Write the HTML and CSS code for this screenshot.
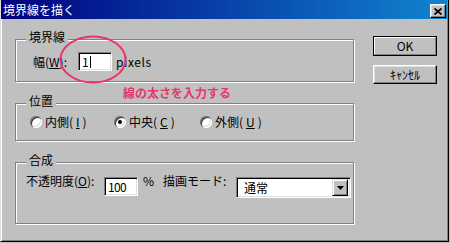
FILE: index.html
```html
<!DOCTYPE html>
<html lang="ja">
<head>
<meta charset="utf-8">
<title>境界線を描く</title>
<link rel="stylesheet" href="styles.css">
</head>
<body>
<div class="window">
  <div class="titlebar">
    <span class="title">境界線を描く</span>
    <span class="close"><svg width="8" height="7" viewBox="0 0 8 7"><path d="M0.5 0.5 L7.5 6.5 M7.5 0.5 L0.5 6.5" stroke="#000" stroke-width="1.7" fill="none"/></svg></span>
  </div>
  <div class="content">
    <div class="left">
      <div class="group g1">
        <span class="legend">境界線</span>
        <div class="row row1">
          <span class="lbl lbl-width">幅(<u>W</u>):</span>
          <span class="textbox tb-width"><span class="val">1</span><span class="caret"></span></span>
          <span class="unit">pixels</span>
        </div>
      </div>
      <div class="group g2">
        <span class="legend">位置</span>
        <div class="radios">
          <span class="radio"><span class="rb"></span>内側(<u>I</u>)</span>
          <span class="radio"><span class="rb checked"></span>中央(<u>C</u>)</span>
          <span class="radio"><span class="rb"></span>外側(<u>U</u>)</span>
        </div>
      </div>
      <div class="group g3">
        <span class="legend">合成</span>
        <div class="row row3">
          <span class="lbl lbl-opacity">不透明度(<u>O</u>):</span>
          <span class="textbox tb-opacity"><span class="val num">100</span></span>
          <span class="lbl pct">%</span>
          <span class="lbl lbl-mode">描画モード:</span>
          <span class="select"><span class="sel-text">通常</span><span class="arrow"><svg width="7" height="4" viewBox="0 0 7 4"><path d="M0 0H7L3.5 4Z" fill="#000"/></svg></span></span>
        </div>
      </div>
    </div>
    <div class="buttons">
      <div class="btn default"><span class="btn-in">OK</span></div>
      <div class="btn"><span class="btn-in">ｷｬﾝｾﾙ</span></div>
    </div>
  </div>
  <svg class="annot-ellipse" width="68" height="50" viewBox="0 0 68 50"><ellipse cx="34" cy="24.5" rx="32.5" ry="23" fill="none" stroke="#e8356c" stroke-width="2"/></svg>
  <div class="annot-text">線の太さを入力する</div>
</div>
</body>
</html>
```

FILE: styles.css
```css
html, body {
  margin: 0;
  padding: 0;
  background: #c0c0c0;
}
body {
  font-family: "Noto Sans CJK JP", "Noto Sans", sans-serif;
  font-size: 12px;
  line-height: 14px;
  color: #000;
}
.window {
  position: relative;
  width: 449px;
  height: 242px;
  box-sizing: border-box;
  border-left: 1px solid #dfdfdf;
  border-right: 1px solid #000;
  border-bottom: 1px solid #000;
  box-shadow: inset 1px 0 #fff, inset -1px -1px #808080;
  background: #c0c0c0;
  display: flex;
  flex-direction: column;
}
.titlebar {
  height: 19px;
  margin-right: 1px;
  display: flex;
  align-items: flex-start;
  justify-content: space-between;
  background: linear-gradient(to right, #000080, #1084d0);
}
.title {
  color: #fff;
  line-height: 19px;
  padding-left: 2px;
}
.close {
  margin-top: 4px;
  margin-right: 1px;
  width: 16px;
  height: 14px;
  box-sizing: border-box;
  background: #c0c0c0;
  border: 1px solid;
  border-color: #fff #000 #000 #fff;
  box-shadow: inset -1px -1px #808080, inset 1px 1px #dfdfdf;
  display: flex;
  align-items: center;
  justify-content: center;
}
.close svg { display: block; }
.content {
  display: flex;
  gap: 19px;
  padding: 17px 0 0 14px;
}
.left {
  width: 339px;
  padding-top: 3px;
  display: flex;
  flex-direction: column;
  gap: 21px;
}
.group {
  position: relative;
  box-sizing: border-box;
  border: 1px solid #808080;
  box-shadow: inset 1px 1px #fff, 1px 1px #fff;
}
.legend {
  position: absolute;
  top: -10px;
  left: 10px;
  padding: 0 3px;
  background: #c0c0c0;
}
.g1 { height: 43px; padding: 12px 0 0 17px; }
.g2 { height: 38px; padding-left: 14px; display: flex; align-items: center; }
.g3 { height: 62px; padding: 14px 0 0 10px; }
.row {
  display: flex;
}
.row1 { align-items: center; }
.row3 { align-items: flex-start; }
.row3 .lbl { margin-top: -3px; }
.lbl { flex: none; }
.lbl-width { width: 45px; }
.lbl-opacity { width: 78px; }
.pct { margin-left: 5px; width: 9px; }
.lbl-mode { margin-left: 11px; width: 73px; }
.unit { margin-left: 4px; letter-spacing: 0.6px; }
u { text-decoration: underline; text-underline-offset: 1px; }
.textbox {
  flex: none;
  box-sizing: border-box;
  height: 19px;
  background: #fff;
  border: 1px solid;
  border-color: #808080 #fff #fff #808080;
  box-shadow: inset 1px 1px #000, inset -1px -1px #dfdfdf;
  display: flex;
  align-items: center;
  padding-left: 3px;
}
.tb-width { width: 34px; }
.tb-opacity { width: 34px; }
.val { line-height: 14px; }
.num { letter-spacing: -0.6px; }
.caret {
  width: 1px;
  height: 12px;
  margin-left: 1px;
  background: #000;
}
.radios {
  display: grid;
  grid-template-columns: 84px 86px auto;
  align-items: center;
  width: 100%;
}
.radio {
  display: flex;
  align-items: center;
  gap: 3px;
}
.rb {
  flex: none;
  width: 12px;
  height: 12px;
  border-radius: 50%;
  background: #fff;
  box-shadow: inset 1px 1px #808080, inset 2px 2px #404040, inset -1px -1px #fff, inset -2px -2px #dfdfdf;
  display: flex;
  align-items: center;
  justify-content: center;
}
.rb.checked::after {
  content: "";
  width: 4px;
  height: 4px;
  border-radius: 50%;
  background: #000;
}
.select {
  flex: none;
  box-sizing: border-box;
  width: 115px;
  height: 21px;
  background: #fff;
  border: 1px solid;
  border-color: #808080 #fff #fff #808080;
  box-shadow: inset 1px 1px #000, inset -1px -1px #dfdfdf;
  display: flex;
  align-items: center;
  justify-content: space-between;
  padding: 0 2px 0 7px;
}
.arrow {
  box-sizing: border-box;
  width: 16px;
  height: 17px;
  background: #c0c0c0;
  border: 1px solid;
  border-color: #dfdfdf #000 #000 #dfdfdf;
  box-shadow: inset 1px 1px #fff, inset -1px -1px #808080;
  display: flex;
  align-items: center;
  justify-content: center;
}
.arrow svg { display: block; }
.buttons {
  display: flex;
  flex-direction: column;
  gap: 9px;
}
.btn {
  box-sizing: border-box;
  width: 64px;
  height: 19px;
  background: #c0c0c0;
  border: 1px solid;
  border-color: #fff #000 #000 #fff;
  box-shadow: inset -1px -1px #808080, inset 1px 1px #dfdfdf;
  display: flex;
  align-items: center;
  justify-content: center;
}
.btn.default {
  height: 20px;
  border: 1px solid #000;
  box-shadow: none;
  padding: 0;
}
.btn.default .btn-in {
  width: 100%;
  height: 100%;
  box-sizing: border-box;
  border: 1px solid;
  border-color: #fff #808080 #808080 #fff;
  display: flex;
  align-items: center;
  justify-content: center;
}
.btn-in { line-height: 14px; }
.annot-ellipse {
  position: absolute;
  left: 58px;
  top: 35px;
}
.annot-text {
  position: absolute;
  left: 122px;
  top: 86px;
  color: #e8356c;
  font-weight: 700;
  white-space: nowrap;
}
```
